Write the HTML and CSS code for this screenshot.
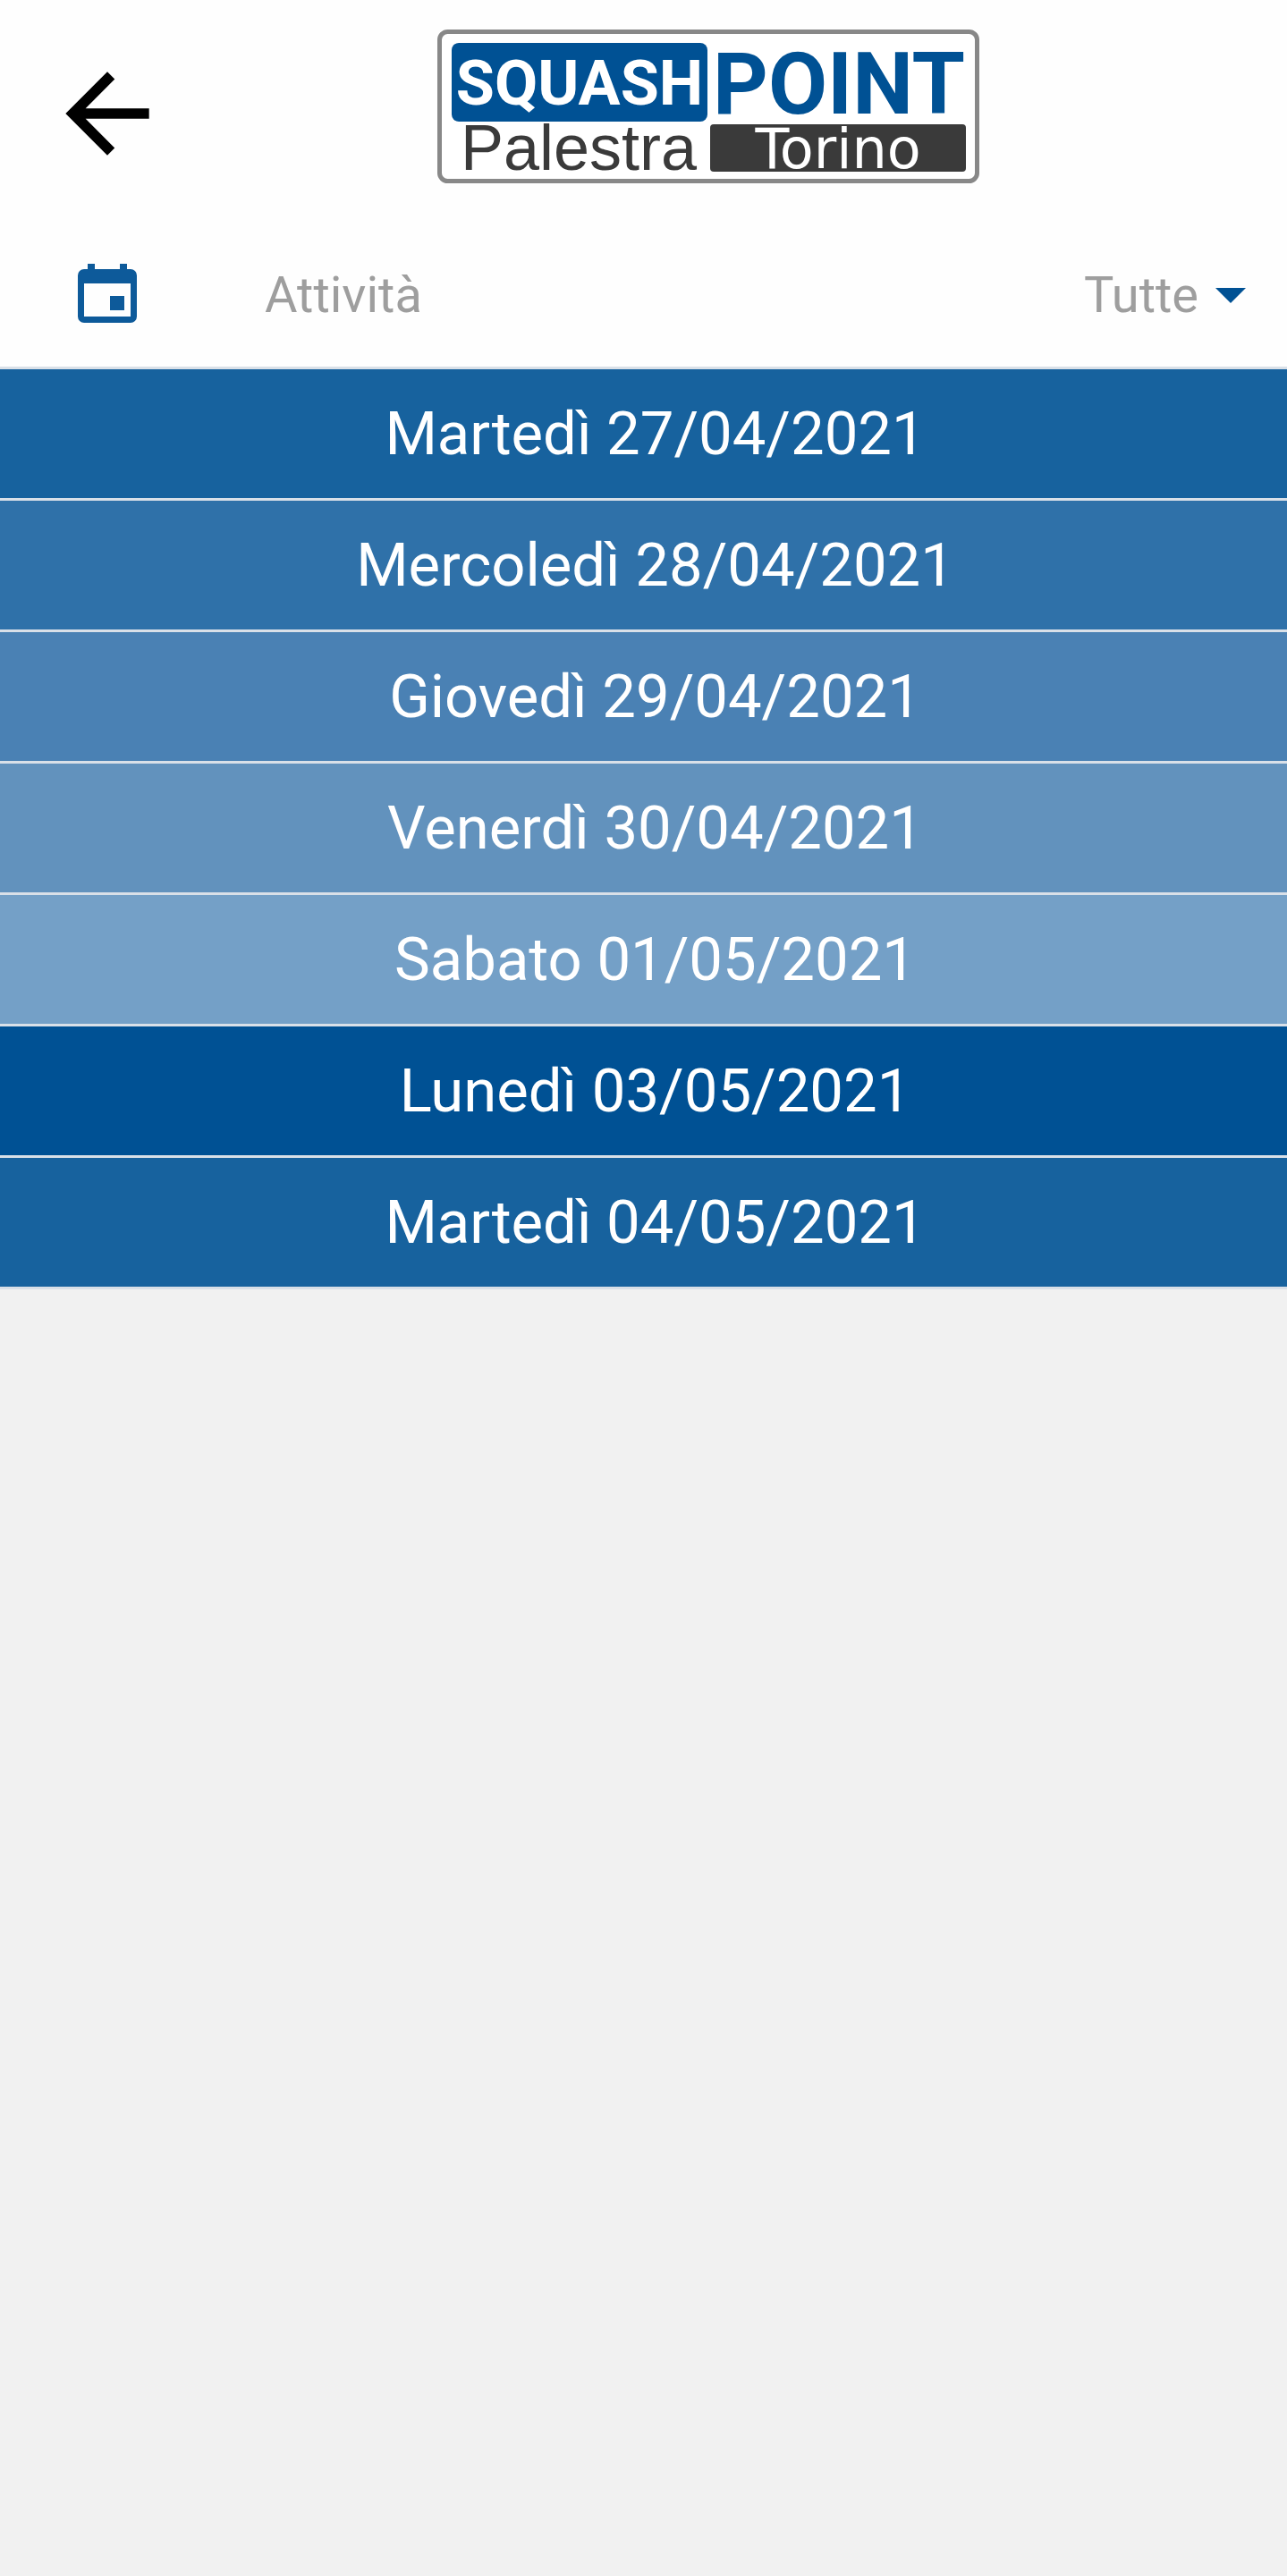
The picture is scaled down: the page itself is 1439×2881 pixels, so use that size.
FILE: index.html
```html
<!DOCTYPE html>
<html lang="it">
<head>
<meta charset="utf-8">
<meta name="viewport" content="width=device-width, initial-scale=1">
<title>Squash Point - Attività</title>
<link rel="stylesheet" href="styles.css">
</head>
<body>
<header class="topbar">
  <button class="back" type="button" aria-label="Indietro">
    <svg viewBox="0 0 24 24" width="140" height="140" aria-hidden="true"><path d="M20 11H7.83l5.59-5.59L12 4l-8 8 8 8 1.41-1.41L7.83 13H20v-2z"/></svg>
  </button>
  <div class="brand">
    <svg class="logo" viewBox="0 0 606 172" width="606" height="172" role="img" aria-label="Squash Point Palestra Torino">
      <rect class="logo-frame" x="2.5" y="2.5" width="601" height="167" rx="9"/>
      <rect class="logo-blue" x="16" y="15" width="286" height="88" rx="8"/>
      <text class="logo-squash" x="159" y="84">SQUASH</text>
      <text class="logo-point" x="449" y="94">POINT</text>
      <text class="logo-palestra" x="158" y="157">Palestra</text>
      <rect class="logo-dark" x="305" y="106" width="286" height="53" rx="4"/>
      <text class="logo-torino" x="448" y="155">Torino</text>
    </svg>
  </div>
</header>
<main>
  <form class="filter">
    <button class="calendar" type="button" aria-label="Scegli data">
      <svg viewBox="0 0 66 66" width="66" height="66" aria-hidden="true"><path fill-rule="evenodd" d="M11 0h8v6h28V0h8v6h4a7 7 0 0 1 7 7v46a7 7 0 0 1-7 7H7a7 7 0 0 1-7-7V13a7 7 0 0 1 7-7h4zM7 22v37h52V22zM36 36h16v16H36z"/></svg>
    </button>
    <label class="filter-label" for="attivita">Attività</label>
    <select class="filter-select" id="attivita"><option>Tutte</option></select>
    <svg class="caret" viewBox="0 0 34 17" width="34" height="17" aria-hidden="true"><path d="M0 0h34L17 17z"/></svg>
  </form>
  <ul class="days">
    <li><button class="day tue" type="button">Martedì 27/04/2021</button></li>
    <li><button class="day wed" type="button">Mercoledì 28/04/2021</button></li>
    <li><button class="day thu" type="button">Giovedì 29/04/2021</button></li>
    <li><button class="day fri" type="button">Venerdì 30/04/2021</button></li>
    <li><button class="day sat" type="button">Sabato 01/05/2021</button></li>
    <li><button class="day mon" type="button">Lunedì 03/05/2021</button></li>
    <li><button class="day tue" type="button">Martedì 04/05/2021</button></li>
  </ul>
</main>
</body>
</html>
```
FILE: styles.css
```css
* {
  box-sizing: border-box;
}

body {
  margin: 0;
  background: #f1f1f1;
  font-family: Roboto, "Liberation Sans", sans-serif;
}

button,
select {
  margin: 0;
  padding: 0;
  border: 0;
  background: none;
  font: inherit;
  appearance: none;
  cursor: pointer;
}

svg {
  display: block;
}

.topbar {
  display: flex;
  align-items: flex-start;
  padding: 33px 46px 48px 50px;
  background: #fefefe;
}

.back {
  margin-top: 24px;
}

.back svg {
  fill: #000;
}

.brand {
  flex: 1;
  display: flex;
  justify-content: center;
}

.logo text {
  text-anchor: middle;
}

.logo-frame {
  fill: #fff;
  stroke: #888;
  stroke-width: 5px;
}

.logo-blue {
  fill: #005194;
}

.logo-dark {
  fill: #3a3a3a;
}

.logo-squash,
.logo-point {
  font-family: Roboto, "Liberation Sans", sans-serif;
  font-weight: 700;
}

.logo-squash {
  fill: #fff;
  font-size: 70px;
}

.logo-point {
  fill: #005194;
  font-size: 96px;
}

.logo-palestra {
  fill: #3a3a3a;
  font-family: "Liberation Sans", sans-serif;
  font-size: 72px;
}

.logo-torino {
  fill: #fff;
  font-family: "DejaVu Sans", sans-serif;
  font-size: 62px;
}

.filter {
  display: flex;
  align-items: center;
  height: 160px;
  padding: 0 46px 3px 87px;
  border-bottom: 3px solid #d9e0e8;
  background: #fefefe;
  color: #9e9e9e;
  font-size: 56px;
}

.calendar {
  margin: 0 143px 4px 0;
}

.calendar svg {
  fill: #0d5a9a;
}

.filter-label {
  flex: 1;
}

.filter-select {
  color: inherit;
}

.caret {
  margin-left: 18px;
  fill: #005194;
}

.days {
  margin: 0;
  padding: 0;
  list-style: none;
}

.day {
  display: block;
  width: 100%;
  padding: 32px 0 32px 26px;
  border-bottom: 3px solid #d9e0e8;
  color: #fff;
  font-size: 67px;
  line-height: 80px;
  text-align: center;
}

.mon {
  background: #005194;
}

.tue {
  background: #17629e;
}

.wed {
  background: #2f71a9;
}

.thu {
  background: #4a81b4;
}

.fri {
  background: #6292bd;
}

.sat {
  background: #74a0c7;
}
```
